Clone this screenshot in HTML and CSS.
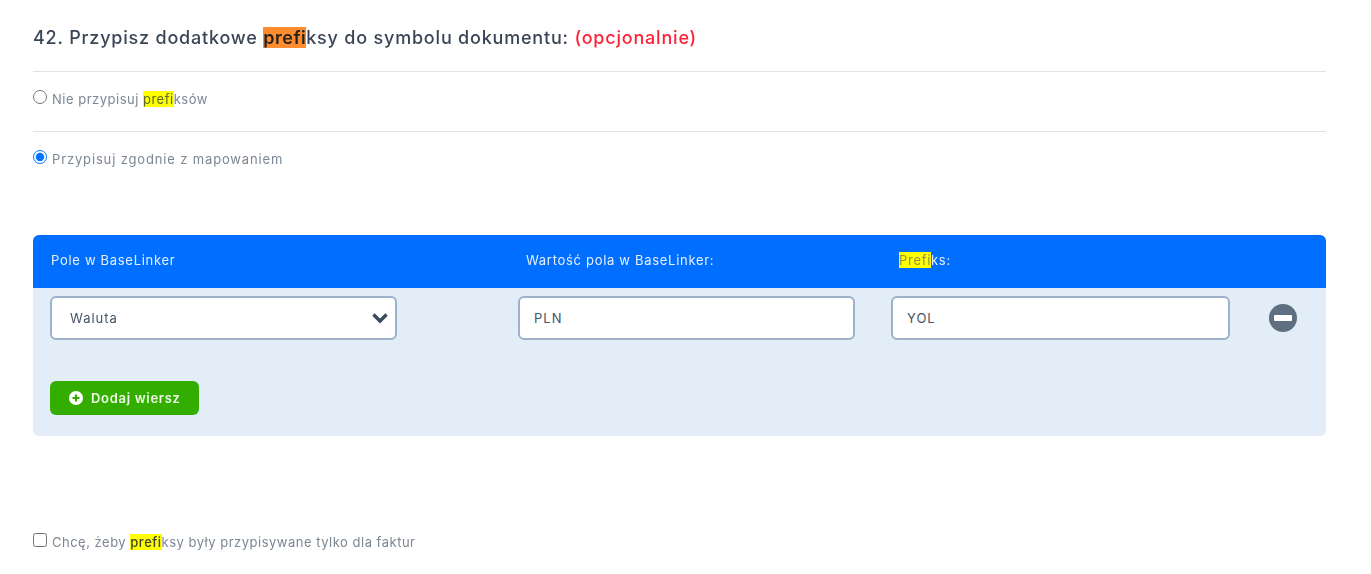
FILE: index.html
```html
<!DOCTYPE html>
<html lang="pl">
<head>
<meta charset="utf-8">
<title>Prefiksy</title>
<link rel="stylesheet" href="styles.css">
</head>
<body>
<main class="page">
  <h2 class="title">42. Przypisz dodatkowe <mark class="hl-orange">prefi</mark>ksy do symbolu dokumentu: <span class="optional">(opcjonalnie)</span></h2>
  <div class="option first">
    <label class="choice"><input type="radio" name="p" class="control"><span>Nie przypisuj <mark class="hl-yellow">prefi</mark>ksów</span></label>
  </div>
  <div class="option">
    <label class="choice wide"><input type="radio" name="p" class="control" checked><span>Przypisuj zgodnie z mapowaniem</span></label>
  </div>
  <section class="mapping">
    <div class="grid head">
      <div class="h1">Pole w BaseLinker</div>
      <div class="h2">Wartość pola w BaseLinker:</div>
      <div class="h2"><mark class="hl-yellow">Prefi</mark>ks:</div>
    </div>
    <div class="body">
      <div class="grid">
        <div class="field select-field w1">
          <span>Waluta</span>
          <svg class="chev" viewBox="0 0 16 11" width="18" height="12"><path d="M2 2.2 8 8.2 14 2.2" fill="none" stroke="#3b4a5e" stroke-width="3.2"/></svg>
        </div>
        <div class="field w2">PLN</div>
        <div class="field w3">YOL</div>
        <svg class="remove" viewBox="0 0 28 28" width="28" height="28"><circle cx="14" cy="14" r="14" fill="#5f6f81"/><rect x="5" y="11" width="18" height="6" rx="1" fill="#fff"/></svg>
      </div>
      <button class="add" type="button">
        <svg viewBox="0 0 14 14" width="14" height="14"><circle cx="7" cy="7" r="7" fill="#fff"/><path d="M7 3.5v7M3.5 7h7" stroke="#33ae00" stroke-width="2.2"/></svg>
        Dodaj wiersz
      </button>
    </div>
  </section>
  <label class="choice check"><input type="checkbox" class="control"><span>Chcę, żeby <mark class="hl-yellow strong">prefi</mark>ksy były przypisywane tylko dla faktur</span></label>
</main>
</body>
</html>
```
FILE: styles.css
```css
* { box-sizing: border-box; }
html, body { margin: 0; background: #fff; }
body { font-family: Inter, "Open Sans", sans-serif; color: #3f4d5f; }
.page { width: 1293px; margin-left: 33px; padding-top: 25px; filter: blur(0.45px); }
.title { margin: 0; padding-top: 1px; height: 47px; font-size: 18px; line-height: 23px; font-weight: 500; color: #3a4657; border-bottom: 1px solid #dfe2e6; letter-spacing: 0.8px; }
.hl-orange { background: #ff8c2e; color: #26231f; font-weight: 600; letter-spacing: 0.5px; }
.hl-yellow { background: #ffff00; color: #5b6a20; }
.hl-yellow.strong { color: #3c4420; font-weight: 500; }
.optional { color: #ff2138; }
.option { height: 60px; border-bottom: 1px solid #dfe2e6; padding-top: 18px; }
.option + .option { border-bottom: 0; }
.choice { display: flex; align-items: flex-start; gap: 5px; font-size: 13px; line-height: 17px; color: #7c8794; letter-spacing: 0.5px; }
.choice.wide { letter-spacing: 0.85px; }
.control { width: 14px; height: 14px; margin: 0; flex: none; }
.choice span { margin-top: 1px; }
.mapping { margin-top: 43px; height: 201px; border-radius: 6px; overflow: hidden; background: #e3edf7; }
.grid { display: grid; grid-template-columns: 468px 373px 339px 28px; padding-left: 17px; align-items: center; }
.head { height: 53px; padding-bottom: 3px; background: #006fff; color: #e6efff; font-size: 13px; letter-spacing: 0.7px; }
.h1 { padding-left: 1px; }
.h2 { padding-left: 8px; }
.head .hl-yellow { color: #8c9440; }
.body { padding-top: 8px; }
.field { height: 44px; background: #fff; border: 2px solid #9db1c9; border-radius: 6px; font-size: 13px; letter-spacing: 1px; color: #465366; display: flex; align-items: center; padding-left: 14px; }
.select-field { justify-content: space-between; padding: 0 6px 0 18px; }
.w1 { width: 347px; }
.w2 { width: 337px; }
.w3 { width: 339px; }
.remove { margin-left: 39px; }
.add { display: flex; align-items: center; gap: 8px; margin: 41px 0 0 17px; width: 149px; height: 34px; padding: 0 0 0 19px; border: 0; border-radius: 6px; background: #33ae00; color: #eef8e6; font: 600 13px Inter, sans-serif; letter-spacing: 0.7px; }
.check { margin-top: 97px; color: #7c8794; }
```
